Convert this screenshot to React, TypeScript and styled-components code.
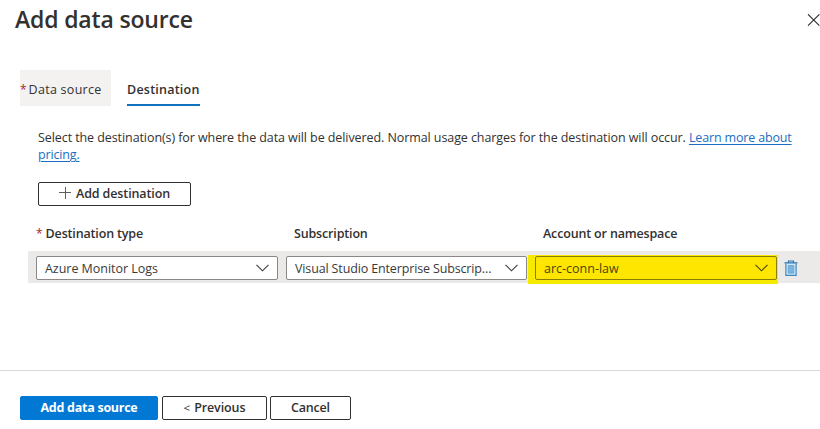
import React from 'react';
import styled, { createGlobalStyle } from 'styled-components';

const GlobalStyle = createGlobalStyle`
  * { box-sizing: border-box; }
  body { margin: 0; background: #fff; overflow: hidden; }
  button { margin: 0; font: inherit; }
`;

const Panel = styled.main`
  display: flex;
  flex-direction: column;
  width: 820px;
  height: 429px;
  overflow: hidden;
  background: #fff;
  color: #323130;
  font-family: 'Open Sans', 'Noto Sans', sans-serif;
  font-size: 12.5px;
  line-height: 17px;
`;

const Header = styled.header`
  display: flex;
  justify-content: space-between;
  height: 70px;
  padding: 3px 0 0 15px;
`;

const Title = styled.h1`
  margin: 0;
  font-size: 23px;
  line-height: 32px;
  font-weight: 600;
  letter-spacing: -0.16px;
  white-space: nowrap;
`;

const CloseButton = styled.button`
  display: flex;
  width: 13px;
  height: 13px;
  margin-top: 11px;
  padding: 0;
  border: 0;
  background: none;
`;

const Label = styled.span<{ $spacing?: number; $weight?: number }>`
  white-space: nowrap;
  letter-spacing: ${(p) => p.$spacing ?? 0}px;
  font-weight: ${(p) => p.$weight ?? 400};
`;

const Required = styled.span<{ $gap: number }>`
  margin-right: ${(p) => p.$gap}px;
  color: #a4262c;
  font-size: 12px;
`;

const Tabs = styled.nav`
  display: flex;
  gap: 16px;
  height: 36px;
  padding-left: 20px;
`;

const Tab = styled.div<{ $active?: boolean; $width: number }>`
  display: flex;
  align-items: center;
  width: ${(p) => p.$width}px;
  padding: 4px 0 ${(p) => (p.$active ? 0 : 2)}px 0;
  border-bottom: ${(p) => (p.$active ? '2px solid #0f73bf' : '0')};
  background: ${(p) => (p.$active ? 'transparent' : '#f3f2f1')};
`;

const Description = styled.p`
  width: 770px;
  margin: 23px 0 0 38px;
`;

const Link = styled.a`
  color: #1b6ec2;
  letter-spacing: -0.16px;
  text-decoration: underline;
  text-underline-offset: 2px;
  text-decoration-thickness: 1px;
`;

const Button = styled.button<{ $width: number; $primary?: boolean }>`
  display: flex;
  align-items: center;
  justify-content: center;
  flex: none;
  width: ${(p) => p.$width}px;
  height: 24px;
  padding: 0 0 1px;
  border: 1px solid ${(p) => (p.$primary ? '#0078d4' : '#323130')};
  border-radius: 2px;
  background: ${(p) => (p.$primary ? '#0078d4' : '#fff')};
  color: ${(p) => (p.$primary ? '#fff' : '#323130')};
`;

const Toolbar = styled.div`
  display: flex;
  margin: 19px 0 0 38px;
  svg { margin: 0 5px 2px 0; }
`;

const Columns = styled.div`
  display: grid;
  grid-template-columns: 242px 241px 242px 20px;
  column-gap: 8px;
`;

const HeadRow = styled(Columns)`
  height: 45px;
  padding: 19px 0 0 36px;
`;

const HeadCell = styled.div<{ $inset?: number }>`
  padding-left: ${(p) => p.$inset ?? 0}px;
  white-space: nowrap;
`;

const DataRow = styled(Columns)`
  align-items: center;
  height: 32px;
  margin-left: 28px;
  padding: 2px 0 0 8px;
  background: #ebeae9;
`;

const Select = styled.div<{ $marked?: boolean }>`
  display: flex;
  align-items: center;
  justify-content: space-between;
  height: 24px;
  padding: 0 8px;
  border: 1px solid ${(p) => (p.$marked ? '#8a7d05' : '#8a8886')};
  border-radius: 2px;
  background: ${(p) => (p.$marked ? '#ffe600' : '#fff')};
  color: ${(p) => (p.$marked ? '#4a4308' : '#3b3a39')};
`;

const Highlight = styled.div`
  align-self: start;
  height: 29px;
  margin: 2px -1px -4px -7px;
  padding: 1px 1px 4px 7px;
  background: #f5ea00;
`;

const IconButton = styled.button`
  display: flex;
  width: 14px;
  margin-left: -1px;
  padding: 0;
  border: 0;
  background: none;
`;

const Footer = styled.footer`
  display: flex;
  height: 59px;
  margin-top: auto;
  padding: 25px 0 0 20px;
  border-top: 1px solid #d8d8d8;
`;

const Arrow = styled.span`
  margin-right: 4px;
  font-size: 11.5px;
`;

const Spacer = styled.div<{ $width: number }>`
  flex: none;
  width: ${(p) => p.$width}px;
`;

const Chevron = () => (
  <svg width="13" height="8" viewBox="0 0 13 8" fill="none" stroke="currentColor" strokeWidth="1.1">
    <path d="M.5 .8 6.5 6.8 12.5 .8" />
  </svg>
);

const Trash = () => (
  <svg width="14" height="17" viewBox="0 0 14 17" fill="none">
    <path d="M1.9 3.5V15.4H12.1V3.5" fill="#d3e7f5" stroke="#3c87c0" strokeWidth="1.2" />
    <path d="M4.2 5.5H9.8V13.2H4.2Z" fill="#7ab4e0" stroke="#5a9dd0" strokeWidth=".7" />
    <path d="M.5 2.8H13.5M4.5 2.5V1H9.5V2.5" stroke="#2474b5" strokeWidth="1.2" />
  </svg>
);

export default function App() {
  return (
    <>
      <GlobalStyle />
      <Panel>
        <Header>
          <Title>Add data source</Title>
          <CloseButton aria-label="Close">
            <svg width="13" height="13" viewBox="0 0 13 13" stroke="#323130" strokeWidth="1.1">
              <path d="M1 .3 12.4 11.7M12.4 .3 1 11.7" />
            </svg>
          </CloseButton>
        </Header>
        <Tabs>
          <Tab $width={91}>
            <Required $gap={2}>*</Required>
            <Label $spacing={0.27}>Data source</Label>
          </Tab>
          <Tab $active $width={73}>
            <Label $weight={600} $spacing={0.23}>Destination</Label>
          </Tab>
        </Tabs>
        <Description>
          <Label $spacing={-0.082}>
            Select the destination(s) for where the data will be delivered. Normal usage charges for the destination will occur.{' '}
            <Link>Learn more about</Link>
          </Label>
          <br />
          <Link>pricing.</Link>
        </Description>
        <Toolbar>
          <Button $width={153}>
            <svg width="12" height="12" viewBox="0 0 12 12" stroke="#605e5c">
              <path d="M0 5.5H12M6.5 0V12" />
            </svg>
            <Label $weight={600} $spacing={-0.12}>Add destination</Label>
          </Button>
        </Toolbar>
        <HeadRow>
          <HeadCell>
            <Required $gap={3}>*</Required>
            <Label $weight={600} $spacing={-0.16}>Destination type</Label>
          </HeadCell>
          <HeadCell $inset={8}><Label $weight={600} $spacing={-0.16}>Subscription</Label></HeadCell>
          <HeadCell $inset={8}><Label $weight={600} $spacing={-0.16}>Account or namespace</Label></HeadCell>
        </HeadRow>
        <DataRow>
          <Select><Label $spacing={-0.03}>Azure Monitor Logs</Label><Chevron /></Select>
          <Select><Label $spacing={-0.14}>Visual Studio Enterprise Subscrip...</Label><Chevron /></Select>
          <Highlight>
            <Select $marked><Label>arc-conn-law</Label><Chevron /></Select>
          </Highlight>
          <IconButton aria-label="Delete"><Trash /></IconButton>
        </DataRow>
        <Footer>
          <Button $primary $width={138}><Label $weight={700} $spacing={-0.27}>Add data source</Label></Button>
          <Spacer $width={4} />
          <Button $width={105}>
            <Arrow>&lt;</Arrow>
            <Label $weight={600} $spacing={-0.1}>Previous</Label>
          </Button>
          <Spacer $width={3} />
          <Button $width={81}><Label $weight={600} $spacing={-0.2}>Cancel</Label></Button>
        </Footer>
      </Panel>
    </>
  );
}
